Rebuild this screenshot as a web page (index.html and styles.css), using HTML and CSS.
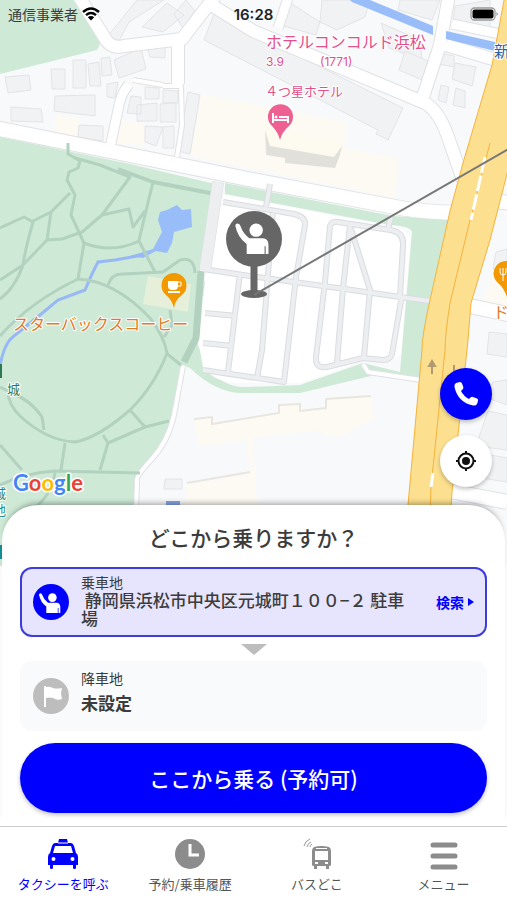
FILE: index.html
```html
<!DOCTYPE html>
<html lang="ja">
<head>
  <meta charset="utf-8">
  <meta name="viewport" content="width=device-width, initial-scale=1">
  <title>タクシーを呼ぶ</title>
  <link rel="stylesheet" href="styles.css">
</head>
<body>
  <svg class="defs" width="0" height="0" aria-hidden="true">
    <symbol id="passenger" viewBox="0 0 36 36">
      <circle cx="19.400" cy="13.600" r="4.300"/>
      <path d="M6 10.800 Q6 9.300 7.500 9.300 Q8.800 9.300 9.300 11 Q11 16 15 18.800 H23.500 Q27.300 19 27.300 23 V29 H25.500 V24 H24.800 V29 H13.300 V22.500 Q7.500 18.500 6 10.800Z"/>
    </symbol>
  </svg>

  <div class="screen">
    <header class="status">
      <span class="carrier">通信事業者
        <svg width="18" height="14" viewBox="0 0 18 14" aria-hidden="true">
          <path d="M1 5 Q9 -2 17 5 M4 8.200 Q9 4 14 8.200" fill="none" stroke="#000" stroke-width="2.400"/>
          <path d="M9 13.500 L5.800 10.300 Q9 7.800 12.200 10.300Z"/>
        </svg>
      </span>
      <span class="time">16:28</span>
      <svg class="battery" width="29" height="14" viewBox="0 0 29 14" aria-hidden="true">
        <rect x="1" y="1" width="24" height="12" rx="3.500" fill="#fff" stroke="#999" stroke-width="1.300"/>
        <rect x="2.500" y="2.500" width="21" height="9" rx="2"/>
        <path d="M26.500 5 Q29 7 26.500 9Z" fill="#888"/>
      </svg>
    </header>

    <main class="map">
      <svg class="map-canvas" viewBox="0 0 507 566" preserveAspectRatio="xMidYMin slice" role="img" aria-label="地図">
        <rect class="land" width="507" height="566"/>

        <!-- parks -->
        <path class="park" d="M0 0H78L101 42L97 50L0 74Z"/>
        <path class="park" d="M0 137L130 164L215 184L200 272L198 345L206 366Q222 387 245 387L300 385L363 363L400 372L412 232Q410 226 390 225L225 194V183L393 216L450 220L430 300L421 380L375 375L300 393H240Q215 392 190 368L183 365L172 417L160 450L138 477L135 505V566H0Z"/>

        <!-- shop areas -->
        <path class="shop" d="M201 94L254 104L345 122V148L399 158L395 198L190 156Z"/>
        <path class="shop" d="M56 114L81 119L79 137L54 133Z M121 120L146 124L144 145L117 143Z"/>
        <path class="shop" d="M492 278L507 285V306L482 300Z M194 419L212 417V424L279 413V405L300 404V411L326 408V399L371 396L375 418L342 436H322V430L253 438V443L257 505V566H185V485L250 474L247 440L198 446Z"/>
        <path class="shop-edge" d="M194 419L212 417V424L279 413V405L300 404V411L326 408V399L371 396 M187 483L250 472"/>
        <path class="cafe" d="M148 276L191 284L188 312L143 304Z"/>

        <!-- buildings -->
        <path class="building" d="M214 14L403 108L388 140L376 134L378 130L204 40Z"/>
        <path class="building" d="M5 77L29 75L31 90L8 93Z M51 69H65V89H52Z M73 60H86V88H73Z M88 64L99 62L101 86H90Z M101 58L110 57L112 75L102 76Z M55 96L95 95V116L54 111Z M11 107L41 109L43 122L11 121Z M79 125L103 126V141L78 137Z M107 84L118 82L115 98L107 97Z M114 60L141 48L146 69L119 78Z M147 45L165 43V58L150 57Z"/>
        <path class="building" d="M145 87L159 88V99H145Z M163 90L178 91V103H163Z M131 96L141 97V114L127 113Z M137 105L157 103V121H137Z M160 104L176 103V122H160Z M145 126L163 127L156 146L145 142Z M163 127L174 126V148H163Z M188 92L200 95L190 154L178 151Z"/>
        <path class="building" d="M108 36L137 0H164L129 22L119 41Z M142 27L167 3L184 15L163 32Z M174 14L186 0L195 11L183 28Z M286 0L320 22L316 35L280 25Z M322 0H370L365 17L337 30L320 22Z M381 23L420 40L422 60L389 48Z"/>
        <path class="building" d="M400 0H440L432 20L398 10Z M455 6L490 0V28L453 21Z M405 51L428 61L422 80L399 70Z M439 53L454 56V67L438 64Z M455 63L476 67L472 86L452 79Z M441 85L449 87L446 103L438 100Z M456 88L465 91V108L453 105Z M496 252L507 249V272L493 269Z M205 281L219 284L216 298L202 295Z"/>
        <path class="building" d="M489 332L507 334V357L487 354Z M493 382L507 380V405L485 397Z M488 411L507 415V450L476 446Z M490 455L507 458V482L474 477Z M165 479H182V489H164Z"/>
        <path class="hotel" d="M266 126L342 144L337 166L269 155Z"/>
        <path class="hotel-side" d="M265 130L270 146L334 157L342 146L340 155L335 168L285 163V158L266 155Z"/>
        <path class="stop" d="M166 501H180V508H166Z"/>

        <!-- streets -->
        <g class="street-edge">
          <path class="w12" d="M78 -5L106 40Q112 49 124 46L182 39L216 -5 M178 40V84 M205 1L253 31L425 103Q439 111 448 137L463 180 M449 -5L440 45L422 100 M446 45L496 60"/>
          <path class="w10" d="M129 84Q120 95 118 110L110 148 M289 -5L278 28 M452 24L500 34"/>
          <path class="w14" d="M-5 128L110 151L253 180L395 207Q420 212 460 213 M480 200L512 203 M465 305L512 315 M445 490L507 502"/>
          <path class="w5" d="M163 86H181L182 125L177 157 M133 80L163 85 M183 366L174 415Q168 442 151 460T137 482L134 570 M363 364L368 372L421 380"/>
        </g>
        <g class="street">
          <path class="w12" d="M78 -5L106 40Q112 49 124 46L182 39L216 -5 M178 40V84 M205 1L253 31L425 103Q439 111 448 137L463 180 M449 -5L440 45L422 100 M446 45L496 60"/>
          <path class="w10" d="M129 84Q120 95 118 110L110 148 M289 -5L278 28 M452 24L500 34"/>
          <path class="w14" d="M-5 128L110 151L253 180L395 207Q420 212 460 213 M480 200L512 203 M465 305L512 315 M445 490L507 502"/>
          <path class="w5" d="M163 86H181L182 125L177 157 M133 80L163 85 M183 366L174 415Q168 442 151 460T137 482L134 570 M363 364L368 372L421 380"/>
        </g>

        <!-- water -->
        <path class="water" d="M350 0H370L433 26V35L352 2Z M446 31L495 42V51L446 39Z"/>
        <path class="water" d="M160 212L167 210L177 205L182 210L191 209L192 227L174 232L172 243L167 253L156 251L143 258L130 256L153 249L162 232L158 220Z"/>
        <path class="stream" d="M143 255L115 260L98 262L92 274L85 290L58 300L40 315L14 336Q4 343 0 366"/>

        <!-- park paths -->
        <g class="trail">
          <path class="trail-wide" d="M118 169L153 182L215 194"/>
          <path class="trail-hedge" d="M201 271L196 338L184 362"/>
          <path d="M68 143V154L80 161L78 168L69 172L67 180L75 195L71 215L84 243Q112 254 139 241L155 272"/>
          <path d="M75 158L100 165L130 177L102 215L82 232L62 239L47 240L51 212L70 193"/>
          <path d="M102 215L129 209L133 227L145 211 M153 182L139 240 M84 243L78 279"/>
          <path d="M0 228L24 217L33 222Q25 250 23 265Q15 288 0 299 M33 221L51 212 M47 240L23 265L0 280"/>
          <path d="M0 336Q30 302 78 279Q115 281 150 318Q164 336 167 353Q155 385 130 410Q98 438 75 442Q48 441 21 417Q8 405 8 391L0 387"/>
          <path d="M108 285Q112 273 123 274L163 272L180 260Q194 256 195 273 M170 310L172 325L164 337 M166 353L181 365"/>
          <path d="M8 391Q31 400 42 417L44 430 M130 410L145 427L169 421 M145 427L108 443L103 435 M108 443L100 470 M65 443L61 470 M0 485Q25 473 55 471L140 473 M0 445L22 470 M55 473Q50 500 30 510"/>
        </g>

        <!-- parking lot -->
        <path class="lot" d="M222 195L253 200L388 226Q412 228 410 245L401 352Q400 359 390 361L363 361L300 383H245Q215 384 203 367L199 345L206 275Z"/>
        <g class="lane-edge">
          <path class="lane-wide" d="M218 182L205 270"/>
          <path d="M203 269L243 275L345 289L400 297L430 301 M223 202L294 214Q306 217 305 225L296 277L284 382L203 370 M270 184L266 207 M273 211L262 350L257 378 M240 273L228 372 M205 313L237 316 M203 343L233 346 M402 295L392 354Q390 360 383 360L363 358L327 367Q315 369 316 357L325 282L330 226Q332 221 338 222L390 230Q404 232 403 245L400 297 M350 225L343 288L337 363 M351 229L370 290L364 357 M388 229L391 216"/>
        </g>
        <g class="lane">
          <path class="lane-wide" d="M218 182L205 270"/>
          <path d="M203 269L243 275L345 289L400 297L430 301 M223 202L294 214Q306 217 305 225L296 277L284 382L203 370 M270 184L266 207 M273 211L262 350L257 378 M240 273L228 372 M205 313L237 316 M203 343L233 346 M402 295L392 354Q390 360 383 360L363 358L327 367Q315 369 316 357L325 282L330 226Q332 221 338 222L390 230Q404 232 403 245L400 297 M350 225L343 288L337 363 M351 229L370 290L364 357 M388 229L391 216"/>
        </g>

        <!-- highway -->
        <path class="highway" d="M505 -5L492 65L463 163L450 211L430 300Q422 335 422 350L408 505L403 570H447L452 492L468 340L471 303L490 240L508 170L530 90V-5Z"/>
        <path class="highway-line" d="M490 143L483 170L470 220L450 303Q445 335 445 350L431 487L428 566"/>
        <path class="highway-dash" d="M485 157L471 220 M433 473L431 487"/>
        <path class="arrow" d="M432 374V365 M429 366L432 361L435 366Z M454 373V365"/>

        <!-- place labels -->
        <g class="label label-hotel">
          <text class="text-l" x="266" y="48">ホテルコンコルド浜松</text>
          <text class="text-s rating" x="266" y="66">3.9</text>
          <text class="text-s rating" x="320" y="66">(1771)</text>
          <text class="text-s" x="265" y="96">４つ星ホテル</text>
        </g>
        <text class="label label-cafe text-l" x="13" y="330">スターバックスコーヒー</text>
        <text class="label label-cafe text-l" x="493" y="318">ド</text>
        <text class="label label-road text-l" x="494" y="57">新</text>
        <text class="label label-park text-s" x="7" y="394">城</text>
        <text class="label label-site text-s" x="-7" y="498">城</text>
        <text class="label label-site text-s" x="-7" y="515">地</text>
        <path class="label-park" d="M0 364H2V378H0Z"/>
        <path class="label-site" d="M0 545H2V559H0Z"/>
        <path class="pin-hotel" d="M280 140Q278 132 272 126A12.500 12.500 0 1 1 289 126Q282 132 280 140Z"/>
        <path class="pin-bed" d="M273 113V123 M273 120H288V123 M279 117H288V120"/>
        <circle cx="276" cy="117" r="1.500" fill="#fff"/>
        <path class="pin-food" d="M174 308Q172 300 166 295A12.500 12.500 0 1 1 182 295Q175 300 174 308Z"/>
        <path class="pin-mark" d="M168 281H178V286Q178 290 174 290H172Q168 290 168 286Z M168 291H180V293H168Z"/>
        <path class="pin-handle" d="M178 282H181V286H178"/>
        <path class="pin-food" d="M507 261A12.500 12.500 0 0 0 498 283Q504 288 507 297Z"/>
        <path class="pin-fork" d="M500 268V272Q500 275 503 275V281 M503 268V275Q506 275 506 272V268"/>

        <g class="google">
          <text x="13" y="491"><tspan class="g-blue">G</tspan><tspan class="g-red">o</tspan><tspan class="g-yellow">o</tspan><tspan class="g-blue">g</tspan><tspan class="g-green">l</tspan><tspan class="g-red">e</tspan></text>
        </g>

        <!-- pickup marker -->
        <ellipse class="marker" cx="254" cy="294" rx="13" ry="4"/>
        <path class="marker-stem" d="M254 262V292"/>
        <circle class="marker" cx="254" cy="239" r="28"/>
        <use href="#passenger" x="226" y="209" width="56" height="56" fill="#fff"/>
        <path class="route" d="M254 295L512 147"/>
      </svg>

      <div class="map-buttons">
        <button class="round-button call" type="button" aria-label="電話">
          <svg width="28" height="28" viewBox="0 0 28 28" aria-hidden="true">
            <path d="M4 3L8 2Q9.500 2 10 3.500L11.300 7Q11.600 8.500 10.500 9.500L9 11Q11.500 16 17 19L18.500 17.500Q19.500 16.500 21 17L25 18.500Q26.500 19.200 26 21L25 24Q24 26 21 25.500Q6 22.500 2.500 7Q2 4 4 3Z" fill="#fff"/>
          </svg>
        </button>
        <button class="round-button" type="button" aria-label="現在地">
          <svg width="22" height="22" viewBox="0 0 22 22" aria-hidden="true">
            <circle cx="11" cy="11" r="7.500" fill="none" stroke="#111" stroke-width="2"/>
            <circle cx="11" cy="11" r="4" fill="#111"/>
            <path d="M11 1V4M11 18V21M1 11H4M18 11H21" stroke="#111" stroke-width="2"/>
          </svg>
        </button>
      </div>
    </main>

    <section class="sheet">
      <h1>どこから乗りますか？</h1>

      <button class="place place-active" type="button">
        <svg class="place-icon" viewBox="0 0 36 36" aria-hidden="true">
          <circle cx="18" cy="18" r="18" fill="#00f"/>
          <use href="#passenger" width="36" height="36" fill="#fff"/>
        </svg>
        <span class="place-text">
          <span class="place-label">乗車地</span>
          <span class="address">&nbsp;静岡県浜松市中央区元城町１００−２ 駐車場</span>
        </span>
        <span class="search">検索
          <svg width="6" height="8" viewBox="0 0 6 8" aria-hidden="true"><path d="M0 0L6 4L0 8Z" fill="#00f"/></svg>
        </span>
      </button>

      <div class="down"></div>

      <button class="place" type="button">
        <svg class="place-icon" viewBox="0 0 36 36" aria-hidden="true">
          <circle cx="18" cy="18" r="18" fill="#bdbdbd"/>
          <path d="M11 8H13V9Q16 8 20 10Q24 11 29 10L28 15L29 21Q24 23 20 20Q16 19 13 20V29H11Z" fill="#fff"/>
        </svg>
        <span class="place-text">
          <span class="place-label">降車地</span>
          <span class="place-value">未設定</span>
        </span>
      </button>

      <button class="ride" type="button">ここから乗る (予約可)</button>
    </section>

    <nav class="tabs">
      <a class="tab tab-active" href="#taxi">
        <svg width="32" height="32" viewBox="0 0 32 32" aria-hidden="true">
          <path fill-rule="evenodd" d="M12 1H20L21 5H24Q26 5 27 8L29 15Q31 16 31 19V27H29V30Q29 31 27.500 31Q26 31 26 30V27H6V30Q6 31 4.500 31Q3 31 3 30V27H1V19Q1 16 3 15L5 8Q6 5 8 5H11Z M8 8L6 15H26L24 8Z M6.500 19A2 2 0 1 0 6.500 23A2 2 0 1 0 6.500 19Z M25.500 19A2 2 0 1 0 25.500 23A2 2 0 1 0 25.500 19Z" fill="#00f"/>
          <path d="M11 5H21" stroke="#fff" stroke-width="1"/>
        </svg>
        <span>タクシーを呼ぶ</span>
      </a>
      <a class="tab" href="#history">
        <svg width="32" height="32" viewBox="0 0 32 32" aria-hidden="true">
          <circle cx="16" cy="16" r="15" fill="#8c8c8c"/>
          <path d="M16 6V17H25" fill="none" stroke="#fff" stroke-width="3"/>
        </svg>
        <span>予約/乗車履歴</span>
      </a>
      <a class="tab" href="#bus">
        <svg width="32" height="32" viewBox="0 0 32 32" aria-hidden="true">
          <path d="M3 8Q4 3 9 1M6 9Q7 5 10 4M9 9Q9 7 11 6" fill="none" stroke="#999" stroke-width="1"/>
          <path fill-rule="evenodd" d="M13 9Q20 7 28 9Q30 10 30 13V27Q30 28 28 28V31H25V28H16V31H13V28Q11 28 11 27V13Q11 10 13 9Z M14 13V22H27V13Z M15 10V11H26V10Z M14 24V26H17V24Z M24 24V26H27V24Z" fill="#8c8c8c"/>
        </svg>
        <span>バスどこ</span>
      </a>
      <a class="tab" href="#menu">
        <svg width="32" height="32" viewBox="0 0 32 32" aria-hidden="true">
          <path d="M5 7H27M5 18H27M5 29H27" stroke="#8c8c8c" stroke-width="5" stroke-linecap="round"/>
        </svg>
        <span>メニュー</span>
      </a>
    </nav>
  </div>
</body>
</html>
```

FILE: styles.css
```css
* {
  box-sizing: border-box;
}

body {
  margin: 0;
  font-family: "Noto Sans CJK JP", sans-serif;
  color: #3c3c3c;
}

button {
  font-family: inherit;
  color: inherit;
  border: none;
  cursor: pointer;
}

svg {
  flex: none;
}

.defs {
  position: absolute;
}

.screen {
  position: relative;
  display: flex;
  flex-direction: column;
  min-height: 100vh;
}

.status {
  position: absolute;
  top: 0;
  left: 0;
  right: 0;
  z-index: 1;
  display: grid;
  grid-template-columns: 1fr auto 1fr;
  align-items: center;
  height: 28px;
  padding: 0 8px;
}

.carrier {
  display: flex;
  align-items: center;
  gap: 4px;
  font-size: 14px;
}

.time {
  font-family: Inter, sans-serif;
  font-size: 15px;
  font-weight: 600;
  color: #222;
}

.battery {
  justify-self: end;
}

/* the map continues behind the rounded corners of the sheet */
.map {
  position: relative;
  flex: 1 0 360px;
  margin-bottom: -61px;
  overflow: hidden;
}

.map-canvas {
  position: absolute;
  width: 100%;
  height: 100%;
}

.land {
  fill: #f8f9fb;
}

.park {
  fill: #ceead6;
}

.shop {
  fill: #fdfaf3;
}

.shop-edge {
  fill: none;
  stroke: #e9e6e0;
  stroke-width: 2;
}

.cafe {
  fill: #e6efd9;
}

.building {
  fill: #f1f2f3;
  stroke: #e2e4e6;
}

.hotel {
  fill: #fdfaf0;
}

.hotel-side {
  fill: #e2e0da;
}

.stop {
  fill: #86a5e8;
}

.street,
.street-edge,
.trail,
.lane,
.lane-edge {
  fill: none;
  stroke-linejoin: round;
}

.street {
  stroke: #fff;
}

.street-edge {
  stroke: #dfe1e4;
}

.street .w5 { stroke-width: 4; }
.street .w10 { stroke-width: 9; }
.street .w12 { stroke-width: 12; }
.street .w14 { stroke-width: 14; }
.street-edge .w5 { stroke-width: 6; }
.street-edge .w10 { stroke-width: 11; }
.street-edge .w12 { stroke-width: 14; }
.street-edge .w14 { stroke-width: 16; }

.water {
  fill: #98bdf8;
}

.stream {
  fill: none;
  stroke: #98b8f5;
  stroke-width: 3;
}

.trail {
  stroke: #b2d2bf;
  stroke-width: 3;
}

.trail-wide {
  stroke-width: 4;
}

.trail-hedge {
  stroke-width: 7;
}

.lot {
  fill: #fff;
}

.lane-edge {
  stroke: #d9dce1;
  stroke-width: 6;
}

.lane {
  stroke: #eceef0;
  stroke-width: 4;
}

.lane-edge .lane-wide {
  stroke-width: 12;
}

.lane .lane-wide {
  stroke-width: 11;
}

.highway {
  fill: #fce08f;
  stroke: #f6b23c;
  stroke-width: 1;
}

.highway-line {
  fill: none;
  stroke: #f6b23c;
  stroke-width: 1;
}

.highway-dash {
  fill: none;
  stroke: #fff;
  stroke-width: 3;
  stroke-dasharray: 16 3;
}

.arrow {
  fill: #b09a70;
  stroke: #b09a70;
  stroke-width: 2;
}

.label {
  stroke: #fff;
  stroke-width: 2px;
  stroke-linejoin: round;
  paint-order: stroke;
}

.text-l {
  font-size: 16px;
}

.text-s {
  font-size: 13px;
}

.rating {
  font-family: Inter, sans-serif;
  font-size: 12px;
}

.label-hotel { fill: #e2508b; }
.label-cafe { fill: #e07b28; }
.label-road { fill: #2f5fa8; }
.label-park { fill: #2c7a52; }
.label-site { fill: #168f94; }

.pin-hotel {
  fill: #ee5f92;
}

.pin-food {
  fill: #f29900;
}

.pin-mark {
  fill: #fff;
}

.pin-bed,
.pin-handle,
.pin-fork {
  fill: none;
  stroke: #fff;
  stroke-width: 2;
}

.pin-handle,
.pin-fork {
  stroke-width: 1;
}

.google {
  font-family: Lato, sans-serif;
  font-size: 22px;
  font-weight: 700;
  stroke: #fff;
  stroke-width: 3px;
  stroke-linejoin: round;
  paint-order: stroke;
}

.g-blue { fill: #4285f4; }
.g-red { fill: #ea4335; }
.g-yellow { fill: #fbbc05; }
.g-green { fill: #34a853; }

.marker {
  fill: #666;
}

.marker-stem {
  stroke: #666;
  stroke-width: 7;
}

.route {
  stroke: #777;
  stroke-width: 2;
}

.map-buttons {
  position: absolute;
  right: 15px;
  bottom: 79px;
  display: flex;
  flex-direction: column;
  gap: 15px;
}

.round-button {
  display: flex;
  align-items: center;
  justify-content: center;
  width: 52px;
  height: 52px;
  padding: 0;
  border-radius: 50%;
  background: #fff;
  box-shadow: 0 2px 4px rgba(0, 0, 0, 0.25);
}

.call {
  background: #00f;
}

.sheet {
  position: relative;
  display: flex;
  flex-direction: column;
  margin: 0 2px;
  padding: 20px 18px 13px;
  border-radius: 36px 36px 0 0;
  background: #fff;
  box-shadow: 0 -5px 6px -4px rgba(0, 0, 0, 0.4);
}

h1 {
  margin: 0 0 18px;
  font-size: 21px;
  font-weight: 500;
  line-height: 24px;
  text-align: center;
}

.place {
  display: flex;
  align-items: center;
  gap: 12px;
  min-height: 70px;
  padding: 6px 13px;
  border-radius: 12px;
  background: #f8fafb;
  text-align: left;
}

.place-active {
  padding: 4px 11px;
  border: 2px solid #3c3cdc;
  background: #e6e5fd;
}

.place-icon {
  width: 36px;
  height: 36px;
}

.place-text {
  display: flex;
  flex: 1;
  flex-direction: column;
  padding: 0 12px 4px 0;
}

.place-label {
  font-size: 14px;
  line-height: 18px;
}

.address,
.place-value {
  font-size: 17px;
  font-weight: 500;
  line-height: 18px;
}

.place-value {
  font-weight: 700;
  line-height: 32px;
}

.search {
  display: flex;
  align-items: center;
  gap: 4px;
  font-size: 14px;
  font-weight: 700;
  color: #00f;
}

.down {
  align-self: center;
  margin: 7px 0 6px;
  border: 13px solid transparent;
  border-top: 11px solid #bdbdbd;
  border-bottom: 0;
}

.ride {
  min-height: 70px;
  margin-top: 12px;
  border-radius: 35px;
  background: #00f;
  color: #fff;
  font-size: 21px;
  font-weight: 500;
  box-shadow: 0 2px 4px rgba(0, 0, 0, 0.25);
}

.tabs {
  position: relative;
  display: grid;
  grid-template-columns: repeat(4, 1fr);
  height: 74px;
  border-top: 1px solid #ccc;
  background: #fff;
}

.tab {
  display: flex;
  flex-direction: column;
  align-items: center;
  gap: 4px;
  padding-top: 11px;
  color: #555;
  font-size: 13px;
  line-height: 20px;
  text-decoration: none;
}

.tab-active {
  color: #00f;
}
```
